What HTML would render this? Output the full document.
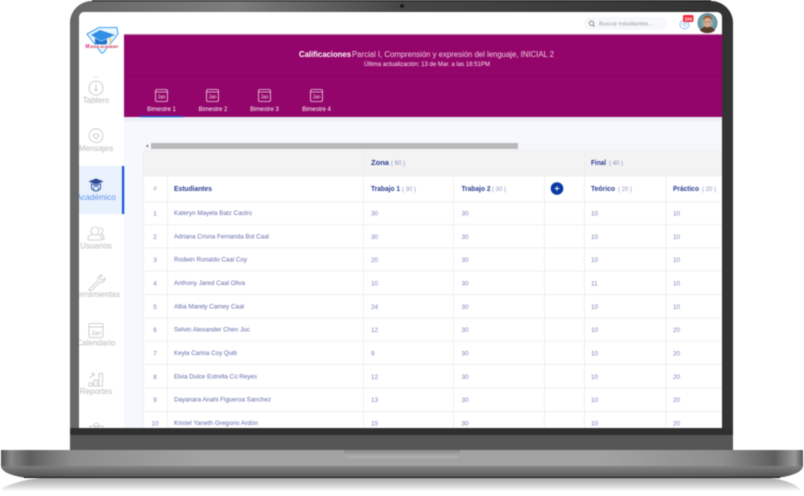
<!DOCTYPE html>
<html lang="es"><head><meta charset="utf-8"><title>Calificaciones</title>
<style>
html,body{margin:0;padding:0;background:#fff;width:804px;height:496px;overflow:hidden}
svg{display:block;filter:blur(.45px)}
text{font-family:"Liberation Sans",sans-serif}
.n{font-size:6.4px;fill:#666cab}
.v{font-size:6.4px;fill:#7a84bc}
.h{font-size:7px;font-weight:bold;fill:#2c3e91}
.g{font-size:6px;fill:#8a93bd}
.s{font-size:8px;fill:#b9b9b9;text-anchor:middle}
.t{font-size:6px;fill:#fff;text-anchor:middle}
.l{stroke:#ececee;stroke-width:.8}
.i{fill:none;stroke:#c4c4c4;stroke-width:.8}
.w{fill:none;stroke:#f3d5e6;stroke-width:.8}
</style></head><body>
<svg width="804" height="496" viewBox="0 0 804 496" xmlns="http://www.w3.org/2000/svg">
<defs>
<linearGradient id="lid" x1="0" y1="0" x2="1" y2="0"><stop offset="0" stop-color="#6a6a6a"/><stop offset=".3" stop-color="#3a3a3a"/><stop offset="1" stop-color="#343434"/></linearGradient>
<linearGradient id="top" x1="0" y1="0" x2="1" y2="0"><stop offset="0" stop-color="#666"/><stop offset=".25" stop-color="#8c8c8c"/><stop offset=".5" stop-color="#4a4a4a"/><stop offset="1" stop-color="#333"/></linearGradient>
<linearGradient id="base" x1="0" y1="0" x2="1" y2="0"><stop offset="0" stop-color="#555"/><stop offset=".012" stop-color="#888"/><stop offset=".035" stop-color="#5e5e5e"/><stop offset=".09" stop-color="#8e8e8e"/><stop offset=".25" stop-color="#a2a2a2"/><stop offset=".75" stop-color="#a2a2a2"/><stop offset=".9" stop-color="#8e8e8e"/><stop offset=".965" stop-color="#5e5e5e"/><stop offset=".99" stop-color="#999"/><stop offset="1" stop-color="#555"/></linearGradient>
<linearGradient id="low" x1="0" y1="0" x2="0" y2="1"><stop offset="0" stop-color="#818181"/><stop offset="1" stop-color="#4a4a4a"/></linearGradient>
<linearGradient id="refl" gradientUnits="userSpaceOnUse" x1="0" y1="478" x2="0" y2="491"><stop offset="0" stop-color="#a8a8a8"/><stop offset=".6" stop-color="#d6d6d6"/><stop offset="1" stop-color="#fff"/></linearGradient>
<linearGradient id="notch" x1="0" y1="0" x2="0" y2="1"><stop offset="0" stop-color="#8a8a8a"/><stop offset="1" stop-color="#b4b4b4"/></linearGradient>
<clipPath id="scr"><path d="M79 17a5 5 0 0 1 5-5H717a5 5 0 0 1 5 5V428H79z"/></clipPath>
<clipPath id="tbl"><rect x="143" y="150" width="579" height="278"/></clipPath>
<radialGradient id="av" cx=".5" cy=".5" r=".5"><stop offset="0" stop-color="#9fc2c8"/><stop offset="1" stop-color="#5f8d98"/></radialGradient>
</defs>

<!-- reflection -->
<path d="M2 488Q20 480 40 478H770Q795 481 803 492V495H796Q790 491 770 491H2z" fill="url(#refl)"/>
<!-- lid -->
<path d="M70 450V22A22 22 0 0 1 92 1H711A22 22 0 0 1 733 22V450z" fill="url(#lid)"/>
<path d="M70 22A22 22 0 0 1 92 1H711A22 22 0 0 1 733 22V24H70z" fill="url(#top)" opacity=".8"/>
<path d="M92 .7H711" stroke="#111" stroke-width="1.2"/>
<rect x="70" y="435" width="663" height="15" fill="#565656"/>
<rect x="70" y="428" width="663" height="7" fill="#2f2f2f"/>
<circle cx="402" cy="6" r="2" fill="#1c1c1c"/>

<!-- screen -->
<g clip-path="url(#scr)">
<rect x="79" y="12" width="643" height="416" fill="#fff"/>
<rect x="124" y="117" width="598" height="311" fill="#f5f8fd"/>
<rect x="124" y="117" width="598" height="4" fill="#eceef7"/>
<rect x="124" y="34" width="598" height="83" fill="#93056a"/>
<rect x="124" y="34" width="598" height="1" fill="#c773aa"/>
<rect x="124" y="76" width="598" height=".6" fill="#85045f"/>
<rect x="140" y="116" width="43" height="1.2" fill="#1b55d8"/>

<!-- title -->
<text x="299" y="57" font-size="8" font-weight="bold" fill="#fff" textLength="52" lengthAdjust="spacingAndGlyphs">Calificaciones</text>
<text x="352" y="57" font-size="8" fill="#f0cfe2" textLength="202" lengthAdjust="spacingAndGlyphs">Parcial I, Comprensión y expresión del lenguaje, INICIAL 2</text>
<text x="364" y="66" font-size="6" fill="#fbeaf4" textLength="126" lengthAdjust="spacingAndGlyphs">Última actualización: 13 de Mar. a las 18:51PM</text>

<!-- tabs -->
<g id="tabs">
<g transform="translate(155 89)"><rect x=".5" y=".5" width="12" height="12" rx="1.5" class="w"/><path d="M.5 3H12.500" class="w"/><text x="6.500" y="9.500" font-size="5" fill="#f6d9ea" text-anchor="middle">Jan</text></g>
<g transform="translate(206 89)"><rect x=".5" y=".5" width="12" height="12" rx="1.5" class="w"/><path d="M.5 3H12.500" class="w"/><text x="6.500" y="9.500" font-size="5" fill="#f6d9ea" text-anchor="middle">Jan</text></g>
<g transform="translate(258 89)"><rect x=".5" y=".5" width="12" height="12" rx="1.5" class="w"/><path d="M.5 3H12.500" class="w"/><text x="6.500" y="9.500" font-size="5" fill="#f6d9ea" text-anchor="middle">Jan</text></g>
<g transform="translate(310 89)"><rect x=".5" y=".5" width="12" height="12" rx="1.5" class="w"/><path d="M.5 3H12.500" class="w"/><text x="6.500" y="9.500" font-size="5" fill="#f6d9ea" text-anchor="middle">Jan</text></g>
<text x="161.500" y="111" class="t">Bimestre 1</text>
<text x="213" y="111" class="t">Bimestre 2</text>
<text x="264.500" y="111" class="t">Bimestre 3</text>
<text x="316.500" y="111" class="t">Bimestre 4</text>
</g>

<!-- header right -->
<rect x="584" y="17" width="83" height="13" rx="6.500" fill="#f6f8fc"/>
<circle cx="591.500" cy="23.200" r="2.200" fill="none" stroke="#888" stroke-width=".9"/><path d="M593 25l1.700 1.700" stroke="#888" stroke-width=".9"/>
<text x="599" y="25.500" font-size="5.800" fill="#9a9a9a" textLength="54" lengthAdjust="spacingAndGlyphs">Buscar estudiantes...</text>
<path d="M685 29c-3-.3-5-2-5-4.500a4.300 4.300 0 0 1 9 0c0 2.500-2 4-4 4.500z" fill="none" stroke="#7fb0f0" stroke-width=".8"/>
<path d="M684.800 26.500l-2-2a1.100 1.100 0 0 1 2-1 1.100 1.100 0 0 1 2 1z" fill="none" stroke="#7fb0f0" stroke-width=".6"/>
<rect x="683" y="15" width="10.500" height="7" rx="1.500" fill="#ee2b3c"/>
<text x="688.200" y="20.300" font-size="4.500" font-weight="bold" fill="#fff" text-anchor="middle">104</text>
<circle cx="707.500" cy="23" r="10" fill="url(#av)"/>
<path d="M700 30.500q2-4 7.500-4t7.500 4q-3 2.600-7.500 2.600t-7.500-2.600z" fill="#5a3c2c"/>
<ellipse cx="707.500" cy="22.500" rx="3.900" ry="5" fill="#dba98c"/>
<path d="M703.400 21q-.4-5.500 4.300-5.500t4 5.300q-1-3-4-3t-4.300 3.200z" fill="#9a5a30"/>
<path d="M704.500 22h2.200M708.300 22h2.200" stroke="#4a3a30" stroke-width=".6"/>

<!-- logo -->
<path d="M87 34L99 27.500 117 27.500 118 34 103 53 101.500 53z" fill="#eaf5ff" stroke="#3aa0ef" stroke-width="1"/>
<path d="M91 35L100 30 115 35 101 41z" fill="#2f8fe6"/>
<path d="M95 38v6q5 2 12 0v-5l-6 2.500z" fill="#2176c9"/>
<path d="M110 37l1 7" stroke="#f0b53a" stroke-width="1"/>
<rect x="85.500" y="44.500" width="33" height="3.800" fill="#fff"/>
<text x="85.500" y="48" font-size="5" font-weight="bold" fill="#e0267f">M</text>
<text x="90.500" y="48" font-size="3.500" font-weight="bold" fill="#c4304f" textLength="28" lengthAdjust="spacingAndGlyphs">EDIA ACADEMY</text>

<!-- sidebar -->
<rect x="79" y="166" width="43" height="48" fill="#e9f1fd"/>
<rect x="122" y="166" width="2.200" height="48" fill="#1552d8"/>
<path d="M93 77h5" stroke="#d9d9d9" stroke-width=".7"/>
<circle cx="96" cy="88" r="7" class="i"/><path d="M96 84v5" class="i"/><circle cx="96" cy="90" r="1" class="i"/>
<text x="96" y="103" class="s">Tablero</text>
<path d="M96 142.500c-4-.4-7-3-7-6.700a7 7 0 0 1 14 0c0 3.700-3 6-4.500 6.700z" class="i"/><path d="M96 139l-3-3a1.700 1.700 0 0 1 3-1.500 1.700 1.700 0 0 1 3 1.500z" class="i"/>
<text x="96" y="151" class="s">Mensajes</text>
<path d="M88.500 181.500l7.500-3 7.500 3-7.500 3z" fill="#2c4b94"/>
<path d="M91.500 184v4.500q4.500 5 9 0V184l-4.500 1.500z" fill="none" stroke="#3c5ba8" stroke-width="1"/>
<circle cx="96" cy="188.500" r="2.400" fill="none" stroke="#3c5ba8" stroke-width=".8"/>
<text x="96" y="200" class="s" style="fill:#5f93ee">Académico</text>
<circle cx="95" cy="231" r="4" class="i"/><path d="M88 240v-2q1-3 4-3.500M102 240v-2q-1-3-4-3.500M88 240h14" class="i"/><path d="M100 227.500a3.500 3.500 0 0 1 1 6.500q2.500.8 3 4v1h-2" class="i"/>
<text x="96" y="248.500" class="s">Usuarios</text>
<path d="M90 288.500l8-8q-1-3 1.500-4.800 1.500-1 3-.5l-2.500 2.500.5 2 2 .5 2.500-2.500q.5 2-1 3.500-1.700 2-4.500 1.300l-8 8q-2.300 1-2.700-1.300z" class="i"/>
<text x="96" y="297" class="s">Herramientas</text>
<rect x="89" y="323.500" width="14" height="14" rx="1.500" class="i"/><path d="M89 327h14" class="i"/><text x="96" y="335" font-size="6" fill="#b9b9b9" text-anchor="middle">Jan</text>
<text x="96" y="345.500" class="s">Calendario</text>
<path d="M89 386v-3h3.500v3zM94 386v-6h3.500v6zM99 386v-12.500h3.500V386zM89 386h14" class="i"/><path d="M89.500 378l4.500-4M91 373.500h3v3" class="i"/>
<text x="96" y="394" class="s">Reportes</text>
<circle cx="96.500" cy="425.500" r="2.500" class="i"/><path d="M90 428v-2h13v2" class="i"/>

<!-- scrollbar -->
<path d="M148 144.500v3l-2-1.500z" fill="#555"/>
<rect x="151" y="143" width="367" height="6" fill="#b9b9b9"/>
<rect x="518" y="143" width="204" height="6" fill="#f4f6f9"/>

<!-- table -->
<g clip-path="url(#tbl)">
<rect x="143" y="150" width="579" height="278" fill="#fff"/>
<rect x="143" y="150" width="579" height="26" fill="#f3f3f3"/>
<path class="l" d="M143 150H722M143 176H722M143 202H722M143 224.500H722M143 247.800H722M143 271H722M143 294.400H722M143 318H722M143 341H722M143 364.400H722M143 388H722M143 411.400H722"/>
<path class="l" d="M143.500 150V428M167.500 176V428M363.500 150V428M453.500 176V428M544.500 176V428M584.500 150V428M665.800 176V428"/>
<text x="371" y="165" class="h" textLength="18" lengthAdjust="spacingAndGlyphs">Zona</text><text x="391" y="165" class="g">( 60 )</text>
<text x="591" y="165" class="h" textLength="15" lengthAdjust="spacingAndGlyphs">Final</text><text x="609" y="165" class="g">( 40 )</text>
<text x="155" y="190.500" class="g" text-anchor="middle">#</text>
<text x="174" y="191" class="h" textLength="38" lengthAdjust="spacingAndGlyphs">Estudiantes</text>
<text x="371" y="191" class="h" textLength="29" lengthAdjust="spacingAndGlyphs">Trabajo 1</text><text x="402" y="191" class="g">( 30 )</text>
<text x="461.500" y="191" class="h" textLength="29" lengthAdjust="spacingAndGlyphs">Trabajo 2</text><text x="492" y="191" class="g">( 30 )</text>
<circle cx="557" cy="188.500" r="6.300" fill="#0a3aa3"/><path d="M554.700 188.500h4.600M557 186.200v4.600" stroke="#fff" stroke-width=".9"/>
<text x="591" y="191" class="h" textLength="24" lengthAdjust="spacingAndGlyphs">Teórico</text><text x="618" y="191" class="g">( 20 )</text>
<text x="673" y="191" class="h" textLength="26" lengthAdjust="spacingAndGlyphs">Práctico</text><text x="702" y="191" class="g">( 20 )</text>

<g class="v" text-anchor="middle">
<text x="155" y="215.500">1</text><text x="155" y="238.800">2</text><text x="155" y="262">3</text><text x="155" y="285.500">4</text><text x="155" y="308.800">5</text><text x="155" y="332">6</text><text x="155" y="355.500">7</text><text x="155" y="378.800">8</text><text x="155" y="402">9</text><text x="155" y="425.500">10</text>
</g>
<g class="n">
<text x="174" y="215" textLength="78" lengthAdjust="spacingAndGlyphs">Kateryn Mayela Batz Castro</text>
<text x="174" y="238.300" textLength="95" lengthAdjust="spacingAndGlyphs">Adriana Crisna Fernanda Bol Caal</text>
<text x="174" y="261.500" textLength="73" lengthAdjust="spacingAndGlyphs">Rodwin Ronaldo Caal Coy</text>
<text x="174" y="285" textLength="71" lengthAdjust="spacingAndGlyphs">Anthony Jared Caal Oliva</text>
<text x="174" y="308.300" textLength="70" lengthAdjust="spacingAndGlyphs">Alba Marely Camey Caal</text>
<text x="174" y="331.500" textLength="76" lengthAdjust="spacingAndGlyphs">Selvin Alexander Chen Juc</text>
<text x="174" y="355" textLength="63" lengthAdjust="spacingAndGlyphs">Keyla Carina Coy Quib</text>
<text x="174" y="378.300" textLength="83" lengthAdjust="spacingAndGlyphs">Elvia Dulce Estrella Cú Reyes</text>
<text x="174" y="401.500" textLength="97" lengthAdjust="spacingAndGlyphs">Dayanara Anahi Figueroa Sanchez</text>
<text x="174" y="425" textLength="84" lengthAdjust="spacingAndGlyphs">Kristel Yaneth Gregorio Ardón</text>
</g>
<g class="v">
<text x="371" y="215.500">30</text><text x="461.500" y="215.500">30</text><text x="591" y="215.500">10</text><text x="673" y="215.500">10</text>
<text x="371" y="238.800">30</text><text x="461.500" y="238.800">30</text><text x="591" y="238.800">10</text><text x="673" y="238.800">10</text>
<text x="371" y="262">20</text><text x="461.500" y="262">30</text><text x="591" y="262">10</text><text x="673" y="262">10</text>
<text x="371" y="285.500">10</text><text x="461.500" y="285.500">30</text><text x="591" y="285.500">11</text><text x="673" y="285.500">10</text>
<text x="371" y="308.800">24</text><text x="461.500" y="308.800">30</text><text x="591" y="308.800">10</text><text x="673" y="308.800">10</text>
<text x="371" y="332">12</text><text x="461.500" y="332">30</text><text x="591" y="332">10</text><text x="673" y="332">20</text>
<text x="371" y="355.500">9</text><text x="461.500" y="355.500">30</text><text x="591" y="355.500">10</text><text x="673" y="355.500">20</text>
<text x="371" y="378.800">12</text><text x="461.500" y="378.800">30</text><text x="591" y="378.800">10</text><text x="673" y="378.800">20</text>
<text x="371" y="402">13</text><text x="461.500" y="402">30</text><text x="591" y="402">10</text><text x="673" y="402">20</text>
<text x="371" y="425.500">15</text><text x="461.500" y="425.500">30</text><text x="591" y="425.500">10</text><text x="673" y="425.500">20</text>
</g>
</g>
</g>

<!-- base -->
<path d="M1 450H803V466Q802 474 780 477.500H24Q2 474 1 466z" fill="url(#base)"/>
<path d="M1 466H803Q802 474 780 477.500H24Q2 474 1 466z" fill="url(#low)" opacity=".85"/>
<path d="M24 477.500H780" stroke="#111" stroke-width="1"/>
<path d="M344 450H460V453Q460 458 455 458H349Q344 458 344 453z" fill="url(#notch)"/>
</svg>
</body></html>
